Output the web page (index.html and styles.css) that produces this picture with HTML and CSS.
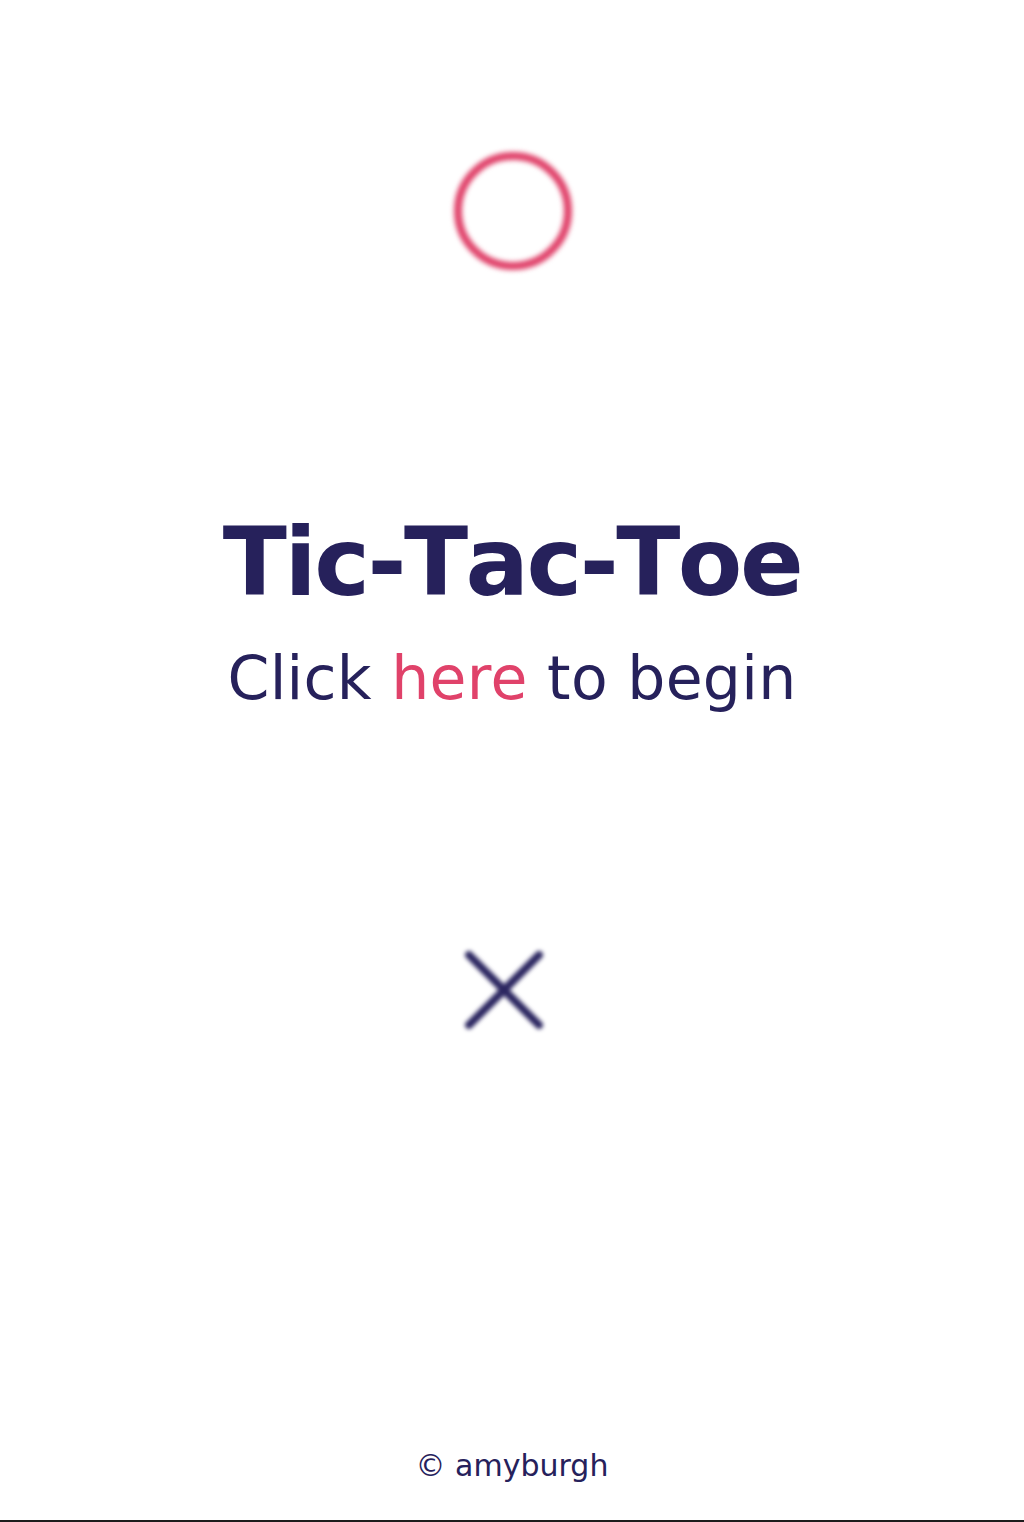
FILE: index.html
```html
<!DOCTYPE html>
<html lang="en">
<head>
<meta charset="utf-8">
<title>Tic-Tac-Toe</title>
<link rel="stylesheet" href="styles.css">
</head>
<body>
<div class="page">
  <div class="circle"></div>
  <h1 class="title">Tic-Tac-Toe</h1>
  <p class="subtitle">Click <a class="here" href="#">here</a> to begin</p>
  <svg class="cross" width="82" height="82" viewBox="0 0 82 82" aria-hidden="true">
    <line x1="6" y1="6" x2="76" y2="76"/>
    <line x1="76" y1="6" x2="6" y2="76"/>
  </svg>
  <footer class="footer">© amyburgh</footer>
</div>
</body>
</html>
```
FILE: styles.css
```css
html, body {
  margin: 0;
  padding: 0;
  background: #ffffff;
}
body {
  font-family: "DejaVu Sans", "Open Sans", sans-serif;
  color: #26215b;
}
.page {
  height: 1520px;
  border-bottom: 2px solid #1c1c1c;
  display: flex;
  flex-direction: column;
  align-items: center;
}
.circle {
  box-sizing: border-box;
  width: 118px;
  height: 118px;
  margin-top: 152px;
  margin-left: 2px;
  border: 8px solid #e0426a;
  border-radius: 50%;
  filter: blur(2.6px);
}
.title {
  margin: 246px 0 0;
  font-family: "DejaVu Sans", "Open Sans", sans-serif;
  font-size: 94px;
  font-weight: 700;
  line-height: 1;
  font-kerning: none;
  letter-spacing: -2.5px;
}
.subtitle {
  margin: 38px 0 0;
  font-size: 60px;
  font-weight: 400;
  line-height: 1;
  letter-spacing: 0.3px;
}
.here {
  color: #e0426a;
  text-decoration: none;
}
.cross {
  margin-top: 241px;
  margin-right: 16px;
  stroke: #2b2660;
  stroke-width: 8;
  stroke-linecap: round;
  filter: blur(2.2px);
}
.footer {
  margin-top: auto;
  margin-bottom: 39px;
  font-size: 30px;
  line-height: 1;
}
```
